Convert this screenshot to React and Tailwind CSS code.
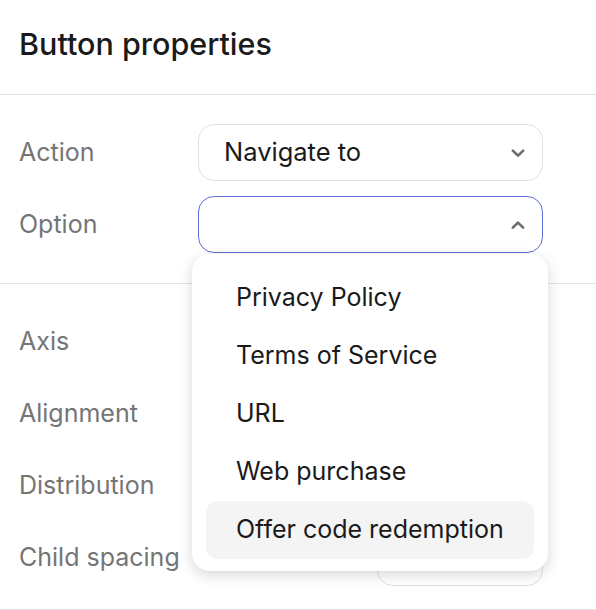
import React from 'react'

function Chevron({ up }) {
  return (
    <svg width="16" height="16" viewBox="0 0 16 16" fill="none" className="shrink-0">
      <path
        d={up ? 'M2.8 10.6 8 5.6l5.2 5' : 'M2.8 5.6 8 10.6l5.2-5'}
        stroke="#6b6b6b"
        strokeWidth="2.6"
        strokeLinecap="round"
        strokeLinejoin="round"
      />
    </svg>
  )
}

function Row({ label, children }) {
  return (
    <div className="flex items-center h-[57px]">
      <div className="w-[179px] shrink-0 text-[25px] text-[#757575]">{label}</div>
      {children}
    </div>
  )
}

const options = ['Privacy Policy', 'Terms of Service', 'URL', 'Web purchase', 'Offer code redemption']

export default function App() {
  return (
    <div className="w-[596px] h-[610px] bg-white overflow-hidden text-[#1a1a1a] font-['Inter','Liberation_Sans',sans-serif]">
      <div className="h-[95px] flex items-center pl-[19px] border-b border-[#e3e3e3]">
        <h1 className="text-[30.5px] font-medium mt-[-6px]">Button properties</h1>
      </div>

      <div className="pl-[19px] pt-[29px] pb-[30px] flex flex-col gap-[15px] border-b border-[#e3e3e3]">
        <Row label="Action">
          <div className="w-[345px] h-[57px] rounded-[16px] border border-[#e0e0e0] flex items-center justify-between pl-[25px] pr-[16px]">
            <span className="text-[25.5px]">Navigate to</span>
            <Chevron />
          </div>
        </Row>
        <Row label="Option">
          <div className="relative w-[345px] h-[57px]">
            <div className="h-full rounded-[16px] border border-[#5b6fd8] flex items-center justify-end pr-[16px]">
              <Chevron up />
            </div>
            <div className="absolute z-10 left-[-6px] top-[58px] w-[356px] rounded-[18px] bg-white shadow-[0_4px_14px_rgba(0,0,0,0.16)] pt-[15px] pb-[12px] px-[14px] flex flex-col">
              {options.map((o, i) => (
                <div
                  key={o}
                  className={
                    'h-[58px] flex items-center pl-[30px] rounded-[12px] text-[25px] ' +
                    (i === options.length - 1 ? 'bg-[#f4f4f4]' : '')
                  }
                >
                  {o}
                </div>
              ))}
            </div>
          </div>
        </Row>
      </div>

      <div className="pl-[19px] pt-[29px] pb-[23px] flex flex-col gap-[15px] border-b border-[#e3e3e3]">
        <Row label="Axis">
          <div className="w-[345px] h-[57px] rounded-[16px] border border-[#e0e0e0]" />
        </Row>
        <Row label="Alignment">
          <div className="w-[345px] h-[57px] rounded-[16px] border border-[#e0e0e0]" />
        </Row>
        <Row label="Distribution">
          <div className="w-[345px] h-[57px] rounded-[16px] border border-[#e0e0e0]" />
        </Row>
        <Row label="Child spacing">
          <div className="w-[345px] flex justify-end">
            <div className="w-[166px] h-[57px] rounded-[16px] border border-[#e0e0e0]" />
          </div>
        </Row>
      </div>
    </div>
  )
}
